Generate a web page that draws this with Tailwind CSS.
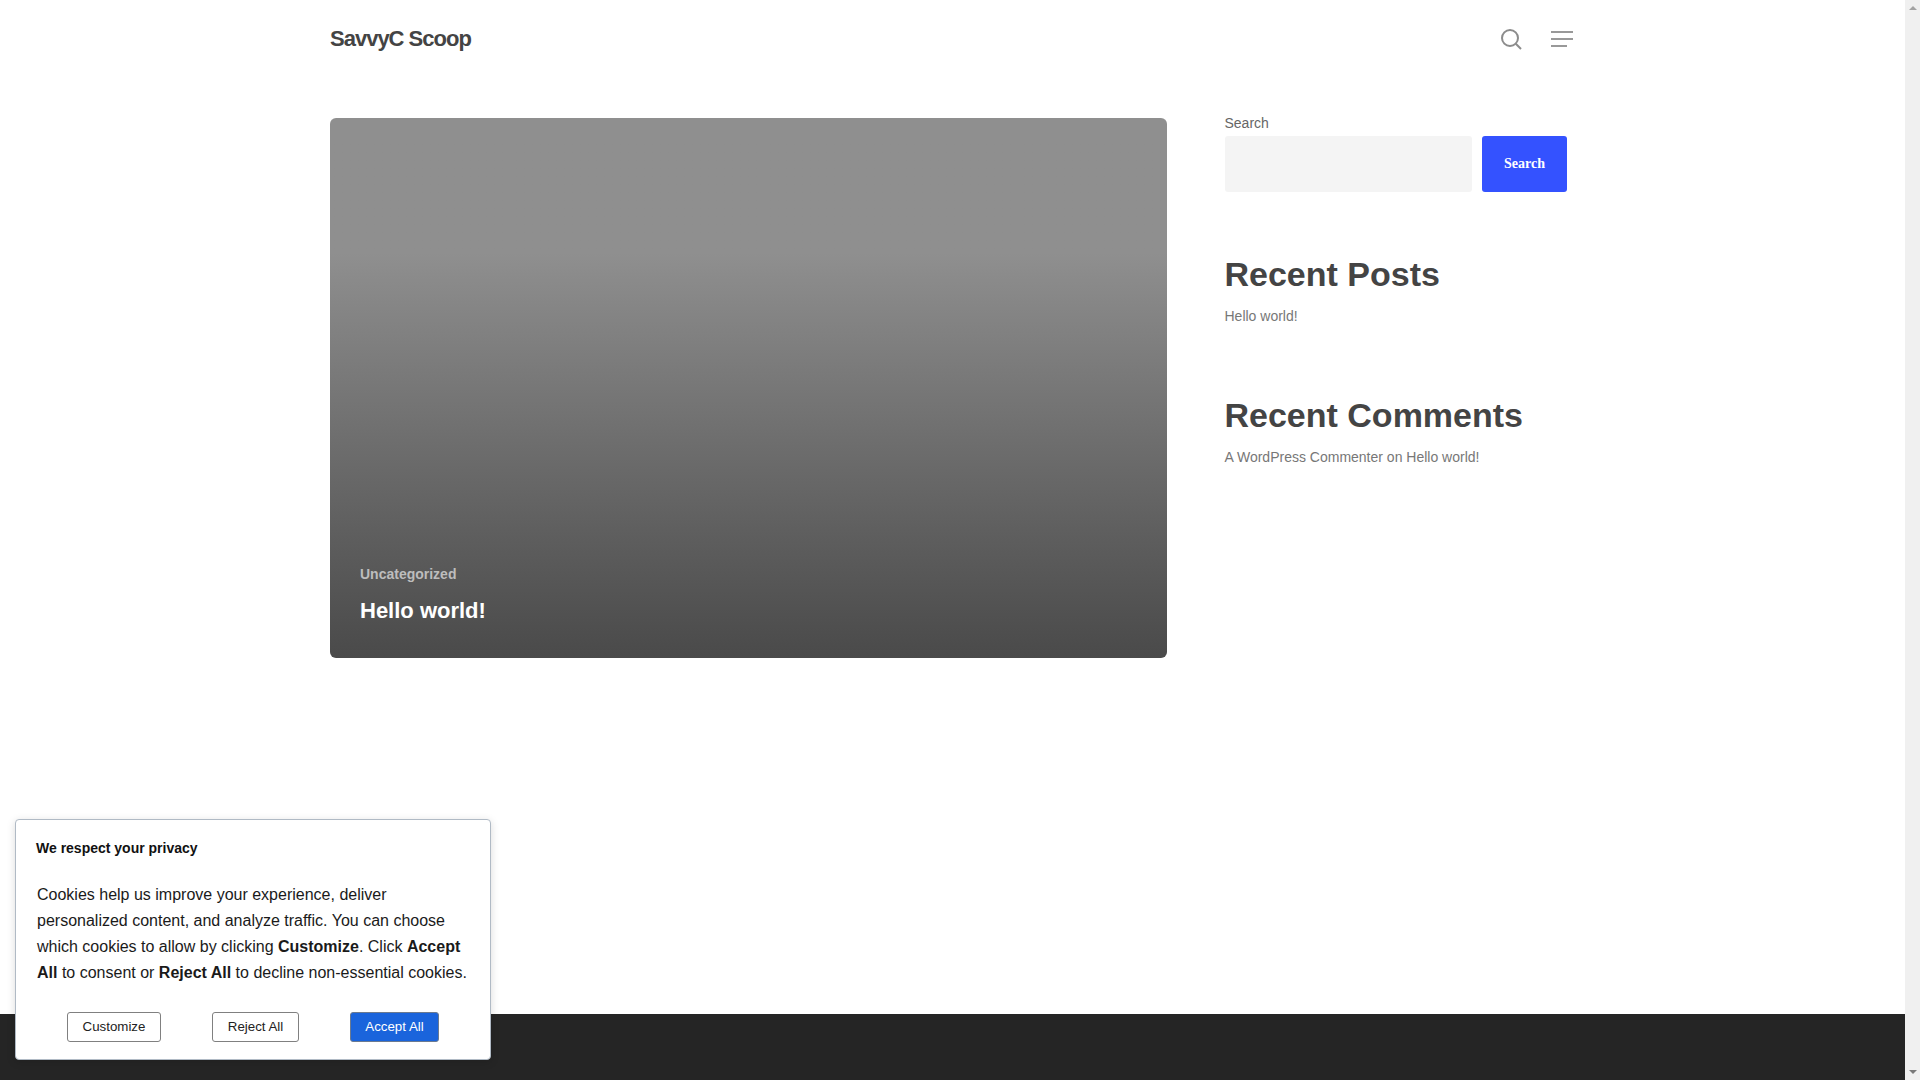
<!DOCTYPE html>
<html lang="en">

<head>
    <meta charset="UTF-8">
    <meta name="viewport" content="width=device-width, initial-scale=1.0">
    <title>SavvyC Scoop</title>
    <script src="https://cdn.jsdelivr.net/npm/@tailwindcss/browser@4"></script>
</head>

<body class="relative flex h-screen overflow-hidden bg-white font-['Liberation_Sans',Arial,sans-serif]">
    <div class="flex h-full w-[1905px] flex-col">
        <!-- Header -->
        <header class="ml-[330px] flex h-[77px] w-[1243px] shrink-0 items-center justify-between">
            <a href="#" class="text-[22px] font-bold tracking-[-1px] text-[#444]">SavvyC Scoop</a>
            <div class="flex items-center gap-[29px]">
                <svg width="22" height="22" viewBox="0 0 22 22" fill="none" stroke="#8c8c8c" stroke-width="2">
                    <circle cx="10" cy="10" r="8" />
                    <path d="M15.8 15.8 L21 21" />
                </svg>
                <div class="flex w-[22px] flex-col gap-[5px]">
                    <span class="block h-[2px] w-[22px] bg-[#999]"></span>
                    <span class="block h-[2px] w-[22px] bg-[#999]"></span>
                    <span class="block h-[2px] w-[16px] bg-[#999]"></span>
                </div>
            </div>
        </header>

        <!-- Content -->
        <main class="ml-[330px] flex items-start">
            <article class="mt-[41px] flex h-[540px] w-[837px] shrink-0 flex-col justify-end rounded-[6px] bg-gradient-to-b from-[#8f8f8f] from-25% to-[#4a4a4a] pb-[32px] pl-[30px]">
                <a href="#" class="text-[14px] leading-[20px] font-bold text-[#bdbdbd]">Uncategorized</a>
                <h3 class="mt-[12px] text-[22px] leading-[30px] font-bold text-white">Hello world!</h3>
            </article>

            <aside class="mt-[36px] ml-[57.5px] w-[343px]">
                <label class="block text-[14px] leading-[20px] text-[#666]">Search</label>
                <div class="mt-[3px] flex gap-[10px]">
                    <input type="text" class="h-[56px] w-[247.5px] rounded-[3px] bg-[#f4f4f4]">
                    <button class="h-[56px] w-[85px] rounded-[3px] bg-[#3452ff] pb-[2px] font-['Liberation_Serif',serif] text-[14px] font-bold text-white">Search</button>
                </div>

                <h2 class="mt-[61px] text-[34px] leading-[42px] font-bold text-[#444]">Recent Posts</h2>
                <p class="mt-[11px] text-[14px] leading-[20px] text-[#777]">Hello world!</p>

                <h2 class="mt-[68px] text-[34px] leading-[42px] font-bold text-[#444]">Recent Comments</h2>
                <p class="mt-[11px] text-[14px] leading-[20px] text-[#777]">A WordPress Commenter on Hello world!</p>
            </aside>
        </main>

        <footer class="mt-auto h-[66px] shrink-0 bg-[#252525]"></footer>
    </div>

    <!-- Scrollbar -->
    <div class="flex h-full w-[15px] shrink-0 flex-col items-center justify-between bg-[#f0f0f0] py-[6px]">
        <span class="h-0 w-0 border-x-[4px] border-b-[4px] border-x-transparent border-b-[#a3a3a3]"></span>
        <span class="h-0 w-0 border-x-[4px] border-t-[4px] border-x-transparent border-t-[#7a7a7a]"></span>
    </div>

    <!-- Cookie notice -->
    <div class="absolute top-[819px] left-[15px] h-[241px] w-[476px] rounded-[4px] border border-[#b0bac5] bg-white shadow-[0_2px_8px_rgba(0,0,0,0.15)]">
        <p class="mt-[18px] ml-[20px] text-[14px] leading-[20px] font-bold text-[#111]">We respect your privacy</p>
        <p class="mt-[24px] ml-[21px] w-[436px] text-[16px] leading-[26px] text-[#1a1a1a]">
            Cookies help us improve your experience, deliver personalized content, and analyze traffic. You can choose which cookies to allow by clicking <b>Customize</b>. Click <b>Accept All</b> to consent or <b>Reject All</b> to decline non-essential cookies.
        </p>
        <div class="mt-[26px] ml-[51px] flex items-start">
            <button class="h-[30px] w-[94px] rounded-[3px] border border-[#808080] bg-white text-[13.3px] text-[#222]">Customize</button>
            <button class="ml-[51px] h-[30px] w-[87px] rounded-[3px] border border-[#808080] bg-white text-[13.3px] text-[#222]">Reject All</button>
            <button class="ml-[51px] h-[30px] w-[89px] rounded-[3px] border border-[#6b7a90] bg-[#1a64dc] text-[13.3px] text-white">Accept All</button>
        </div>
    </div>
</body>

</html>
